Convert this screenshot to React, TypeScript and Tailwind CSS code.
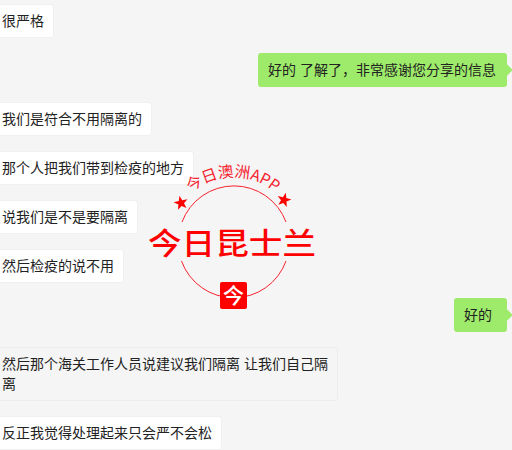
import React from "react";

const font = { fontFamily: '"Liberation Sans", "Noto Sans CJK SC", sans-serif' };
const cjk = '"Noto Sans CJK SC", sans-serif';

function Left({ children, plain }: { children: React.ReactNode; plain?: boolean }) {
  return (
    <div
      className={`-ml-2 w-fit max-w-[346px] rounded-[3px] border px-[9px] py-[6px] text-[14px] leading-[20px] text-[#222] ${
        plain ? "border-[#ededed] bg-[#f5f5f5]" : "border-[#f0f0f0] bg-white"
      }`}
    >
      {children}
    </div>
  );
}

function Right({ children, wide }: { children: React.ReactNode; wide?: boolean }) {
  return (
    <div
      className={`relative mr-[5px] w-fit self-end rounded-[3px] bg-[#9eea6a] py-[7px] pl-[10px] text-[14px] leading-[20px] text-[#222] ${
        wide ? "pr-[15px]" : "pr-[11px]"
      }`}
    >
      {children}
      <span className="absolute -right-[4px] top-[13px] h-2 w-2 rotate-45 bg-[#9eea6a]" />
    </div>
  );
}

function starPoints(cx: number, cy: number, rotate: number) {
  const pts: string[] = [];
  for (let i = 0; i < 10; i++) {
    const r = i % 2 === 0 ? 7.4 : 3;
    const a = ((-90 + rotate + i * 36) * Math.PI) / 180;
    pts.push(`${(cx + r * Math.cos(a)).toFixed(1)},${(cy + r * Math.sin(a)).toFixed(1)}`);
  }
  return pts.join(" ");
}

function Logo() {
  return (
    <svg
      className="absolute left-[140px] top-[160px]"
      width="190"
      height="160"
      viewBox="140 160 190 160"
      fill="none"
    >
      <defs>
        <path id="logo-arc" d="M 173 217 A 65 65 0 0 1 293 217" />
      </defs>
      <path d="M 182 222 A 55.500 55.500 0 0 1 286 222" stroke="#f5222d" strokeWidth="1" />
      <path d="M 181.500 261 A 55.500 55.500 0 0 0 286 261" stroke="#f5222d" strokeWidth="1" />
      <text fontFamily={cjk} fontSize="15.500" fill="#f5222d" textAnchor="middle">
        <textPath href="#logo-arc" startOffset="50%">
          今日澳洲APP
        </textPath>
      </text>
      <polygon points={starPoints(181, 203, -12)} fill="#f00" />
      <polygon points={starPoints(284, 200, 14)} fill="#f00" />
      <text
        x="148"
        y="254"
        fontFamily={cjk}
        fontSize="30"
        fontWeight="500"
        fill="#f00"
        textLength="168"
        lengthAdjust="spacingAndGlyphs"
      >
        今日昆士兰
      </text>
      <rect x="220" y="282" width="27" height="27" rx="2" fill="#f00" />
      <text
        x="233.500"
        y="303"
        textAnchor="middle"
        fontFamily={cjk}
        fontSize="21"
        fontWeight="500"
        fill="#fff"
      >
        今
      </text>
    </svg>
  );
}

export default function App() {
  return (
    <div
      className="relative h-[450px] w-[512px] overflow-hidden bg-[#f5f5f5] pt-1"
      style={font}
    >
      <div className="flex flex-col gap-[15px]">
        <Left>很严格</Left>
        <Right>好的 了解了，非常感谢您分享的信息</Right>
        <Left>我们是符合不用隔离的</Left>
        <Left>那个人把我们带到检疫的地方</Left>
        <Left>说我们是不是要隔离</Left>
        <Left>然后检疫的说不用</Left>
        <Right wide>好的</Right>
        <Left plain>然后那个海关工作人员说建议我们隔离 让我们自己隔离</Left>
        <Left>反正我觉得处理起来只会严不会松</Left>
      </div>
      <Logo />
    </div>
  );
}
